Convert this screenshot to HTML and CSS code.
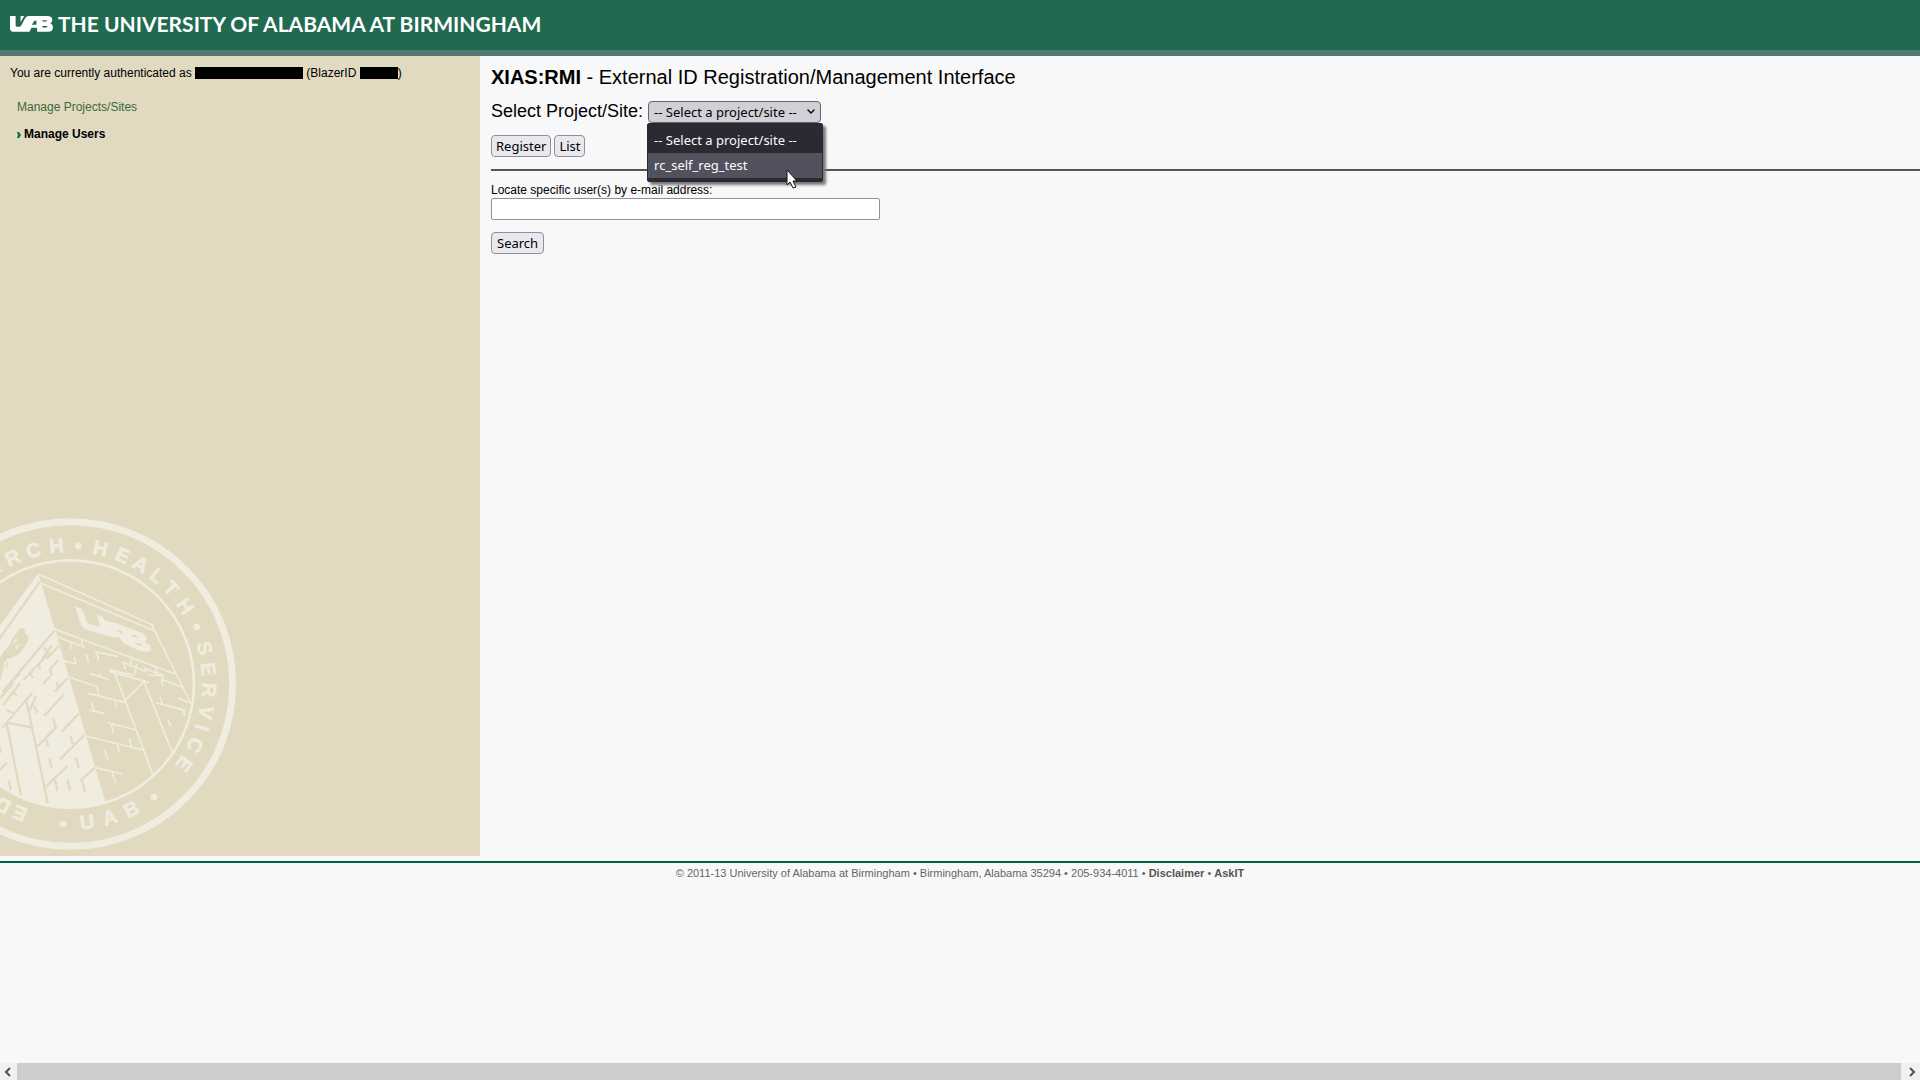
FILE: index.html
```html
<!DOCTYPE html>
<html lang="en">
<head>
<meta charset="utf-8">
<title>XIAS:RMI - External ID Registration/Management Interface</title>
<link rel="stylesheet" href="styles.css">
</head>
<body>
<header class="banner">
  <svg class="logo" viewBox="0 0 130 46" preserveAspectRatio="none" aria-label="UAB" role="img">
    <path fill="#fff" fill-rule="evenodd" d="M0 0H17V27Q17 31 21 31H28Q32 31 34 27L46 6Q50 0 57 0H112Q128 0 128 11Q128 19 122 21Q130 24 130 32Q130 45 114 45H82V34H65L59 45H10Q0 45 0 35ZM32 0H43L32 18ZM66 25H80V14H74ZM98 12V16H109Q112 16 112 14Q112 12 109 12ZM98 29V33H110Q113 33 113 31Q113 29 110 29Z"/>
  </svg>
  <span class="banner-name">THE UNIVERSITY OF ALABAMA AT BIRMINGHAM</span>
</header>

<div class="columns">
  <aside class="sidebar">
    <p class="auth">You are currently authenticated as <span class="bar bar-name"></span> (BlazerID <span class="bar bar-id"></span>)</p>
    <nav class="menu">
      <a class="menu-link" href="#projects">Manage Projects/Sites</a>
      <a class="menu-link current" href="#users"><svg class="marker" viewBox="0 0 4 6"><path fill="#00704f" d="M0 0H2L4 3L2 6H0L1 3Z"/></svg>Manage Users</a>
    </nav>
    <svg class="seal" viewBox="0 0 750 1038" aria-hidden="true">
      <defs>
        <clipPath id="inside"><circle cx="211" cy="522" r="371"/></clipPath>
        <path id="ring-out" d="M-185 522A396 396 0 0 1 607 522A396 396 0 0 1 -185 522"/>
        <path id="ring-in" d="M-227 522A438 438 0 0 0 649 522"/>
      </defs>
      <g clip-path="url(#inside)">
        <path class="fill-light" d="M115 190L-40 400V1000H352L165 358L122 215Z"/>
        <path class="line-dark" d="M119 216L-10 398M163 362L8 545M142 435L98 480M116 458L120 478M155 405L128 445M176 408L140 446M132 412L146 432M175 450L150 478L155 496M100 480L70 510M88 485L98 505M203 503L165 545M172 515L174 540M193 552L133 617M237 610L185 665M170 650L112 710M160 625L166 652M253 675L180 748M140 690L145 710M212 678L218 702M228 742L236 775M148 745L155 775M202 768L138 830M165 810L172 842M203 808L210 843M285 772L240 813M247 813L255 845M80 575L143 880M20 640L63 858M22 638L93 652M97 548L8 652M108 558L90 600M102 588L112 610M60 520L10 585M40 520L0 565M150 500L130 520M35 545L50 555M20 600L42 610M20 758L0 780M27 810L32 840M0 712V730M60 490L20 530"/>
        <path class="fill-dark" d="M0 443L10 425L28 405L42 378L62 354Q76 352 76 371Q88 376 84 393L64 425Q52 438 38 442L24 448L22 475H18L16 460L6 490L0 515Z"/>
        <path class="line-thick" d="M12 463L26 446M40 399L50 388M47 416L58 404"/>
        <path class="line-light" d="M115 192L460 346M124 220L462 362M455 345L575 585M165 358L528 493M172 380L255 412M246 390L249 412M210 395L215 418M190 452L230 462M222 440L228 462M258 432L266 458M285 425L355 440M290 425L296 452M395 442L392 462M368 455L376 476M372 458L440 485M410 462L405 492M445 495L492 497M485 492L489 516M325 478L402 496M270 490L325 508M298 490L302 500M205 500L290 530M328 484L448 517M342 484L458 792M375 572L432 515L516 725M432 475L490 497M463 465L472 490M265 550L378 578M290 530L297 558M345 572L350 592M268 600L312 610M275 575L282 605M322 638L408 660M333 640L340 668M257 678L430 720M313 718L323 750M352 702L358 727M388 683L393 708M285 773L368 792M335 785L347 820M467 578L558 602M480 560L487 582M548 598L555 618M503 627L513 650M535 565L570 578M490 510L545 530M485 510L488 530"/>
        <path class="fill-light" fill-rule="evenodd" d="M225 289L246 296L261 335Q264 342 275 344L302 350L290 315L306 319L317 332L350 340L403 360Q438 369 440 386Q440 394 433 396Q456 404 453 419Q447 431 416 421L370 400L356 381L345 382L325 379L265 361Q247 356 241 340ZM348 359L368 374L364 362ZM392 373L398 380L414 384L408 376ZM405 397L411 405L428 409L421 400Z"/>
      </g>
      <circle class="ring-wide" cx="211" cy="522" r="487"/>
      <circle class="ring-thin" cx="211" cy="522" r="371"/>
      <g class="seal-text">
        <text><textPath href="#ring-out"><tspan x="387 452 515 582">ARCH</tspan><tspan x="709 775 832 890 943 1008">HEALTH</tspan><tspan x="1140 1201 1261 1326 1371 1424 1486">SERVICE</tspan><tspan x="2013 2066">ED</tspan></textPath></text>
        <text><textPath href="#ring-in"><tspan x="741 814 886">UAB</tspan></textPath></text>
      </g>
      <g class="fill-light">
        <circle cx="235" cy="107" r="10"/><circle cx="590" cy="351" r="10"/><circle cx="462" cy="861" r="10"/><circle cx="189" cy="942" r="10"/>
      </g>
    </svg>
  </aside>

  <main class="content">
    <h1 class="title"><b>XIAS:RMI</b> - External ID Registration/Management Interface</h1>
    <div class="project">
      <label for="project">Select Project/Site:</label>
      <div class="picker">
        <select id="project" class="control picker-select"><option>-- Select a project/site --</option><option>rc_self_reg_test</option></select>
        <svg class="chevron" viewBox="0 0 8 6"><path d="M1 1L4 4L7 1" fill="none" stroke="#111" stroke-width="1.5" stroke-linecap="round"/></svg>
        <ul class="popup">
          <li>-- Select a project/site --</li>
          <li class="hover">rc_self_reg_test</li>
        </ul>
        <svg class="pointer" viewBox="0 0 12 20"><path d="M1 1V16L4 13L7 19L10 18L7 12H11Z" fill="#fff" stroke="#111" stroke-width="1"/></svg>
      </div>
    </div>
    <div class="actions">
      <button class="control" type="button">Register</button>
      <button class="control" type="button">List</button>
    </div>
    <hr class="rule">
    <form class="search">
      <label for="email">Locate specific user(s) by e-mail address:</label>
      <input id="email" class="email" type="text">
      <button class="control" type="button">Search</button>
    </form>
  </main>
</div>

<footer class="footer">© 2011-13 University of Alabama at Birmingham • Birmingham, Alabama 35294 • 205-934-4011 • <a href="#disclaimer">Disclaimer</a> • <a href="#askit">AskIT</a></footer>

<div class="scrollbar" aria-hidden="true">
  <svg class="arrow" viewBox="0 0 17 17"><path d="M10 5L6 9L10 13" fill="none" stroke="#505050" stroke-width="2"/></svg>
  <div class="thumb"></div>
  <svg class="arrow" viewBox="0 0 17 17"><path d="M7 5L11 9L7 13" fill="none" stroke="#505050" stroke-width="2"/></svg>
</div>
</body>
</html>
```
FILE: styles.css
```css
* { box-sizing: border-box; }

body {
  margin: 0;
  min-height: 100vh;
  display: flex;
  flex-direction: column;
  background: #f8f8f8;
  color: #000;
  font: 12px/16px "Liberation Sans", Arial, sans-serif;
}

.banner {
  display: flex;
  align-items: center;
  gap: 5px;
  height: 56px;
  padding: 0 10px 3px;
  background: #206b50;
  border-bottom: 6px solid #527b76;
}
.logo { width: 43px; height: 16px; }
.banner-name {
  color: #fff;
  font: 700 21px/24px Lato, sans-serif;
  white-space: nowrap;
}

.columns { display: flex; min-height: 800px; }

.sidebar {
  display: flex;
  flex-direction: column;
  width: 25%;
  background: #e1d9c0;
}
.auth { margin: 9px 10px 18px; }
.bar {
  display: inline-block;
  height: 12px;
  background: #000;
  vertical-align: -2px;
}
.bar-name { width: 108px; }
.bar-id { width: 38px; }
.menu {
  display: flex;
  flex-direction: column;
  gap: 11px;
  padding: 0 17px;
}
.menu-link { color: #3a6b3c; text-decoration: none; }
.current { color: #000; font-weight: bold; }
.marker { width: 4px; height: 6px; margin-right: 3px; }

.seal { width: 250px; height: 346px; margin-top: auto; }
.fill-light { fill: #f0ecdf; }
.fill-dark { fill: #e1d9c0; }
.line-dark { fill: none; stroke: #e1d9c0; stroke-width: 7; }
.line-light { fill: none; stroke: #f0ecdf; stroke-width: 5; }
.line-thick { fill: none; stroke: #f0ecdf; stroke-width: 6; }
.ring-wide { fill: none; stroke: #f0ecdf; stroke-width: 21; }
.ring-thin { fill: none; stroke: #f0ecdf; stroke-width: 8; }
.seal-text {
  fill: #f0ecdf;
  stroke: #f0ecdf;
  stroke-width: 2;
  font: bold 60px "Liberation Sans", Arial, sans-serif;
  text-anchor: middle;
}

.content { flex: 1; padding: 9px 0 0 11px; }
.title { margin: 0; font-size: 20px; line-height: 24px; font-weight: normal; }
.project {
  display: flex;
  gap: 5px;
  margin-top: 12px;
  font-size: 18px;
  line-height: 20px;
}
.control {
  height: 22px;
  padding: 0 5px;
  border: 1px solid #8f8f9d;
  border-radius: 4px;
  background: #e9e9ed;
  color: #000;
  font: 13px/20px "Noto Sans", sans-serif;
}
.picker { position: relative; width: 173px; height: 22px; }
.picker-select {
  display: block;
  width: 100%;
  appearance: none;
  background: #d0d0d7;
  border-color: #676774;
}
.chevron { position: absolute; right: 6px; top: 8px; width: 8px; height: 6px; }
.popup {
  position: absolute;
  z-index: 1;
  top: 22px;
  left: -1px;
  right: -2px;
  margin: 0;
  padding: 4px 0 3px;
  list-style: none;
  background: #2b2a33;
  border: 1px solid #2b2a33;
  border-radius: 2px;
  box-shadow: 3px 3px 3px #777;
  color: #fbfbfe;
  font: 13px/25px "Noto Sans", sans-serif;
}
.popup li { padding: 0 6px; }
.hover { background: #52525e; }
.pointer { position: absolute; z-index: 2; left: 138px; top: 68px; width: 12px; height: 20px; }

.actions { display: flex; gap: 3px; margin-top: 12px; }
.actions .control { padding: 0 4px; }
.rule { height: 2px; margin: 12px 0; border: 0; background: #555; }
.search {
  display: flex;
  flex-direction: column;
  align-items: flex-start;
  line-height: 15px;
}
.email {
  width: 389px;
  height: 22px;
  margin-bottom: 12px;
  border: 1px solid #8f8f9d;
  border-radius: 2px;
  background: #fff;
}

.footer {
  margin-top: 5px;
  padding-top: 3px;
  border-top: 2px solid #006345;
  color: #666;
  font-size: 11px;
  line-height: 14px;
  text-align: center;
}
.footer a { color: #555; font-weight: bold; text-decoration: none; }

.scrollbar { display: flex; height: 17px; margin-top: auto; background: #f0f0f0; }
.arrow { width: 17px; height: 17px; }
.thumb { flex: 1; margin-right: 2px; background: #cdcdcd; }
```
